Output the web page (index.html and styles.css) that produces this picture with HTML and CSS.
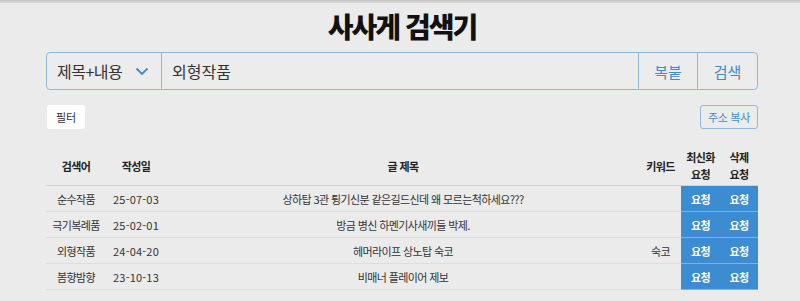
FILE: index.html
```html
<!DOCTYPE html>
<html lang="ko">
<head>
  <meta charset="UTF-8" />
  <meta name="viewport" content="width=device-width, initial-scale=1.0"/>
  <title>사사게 검색기</title>
  <link rel="stylesheet" href="styles.css">
</head>
<body>
  <div class="topbar"></div>
  <main class="wrap">
    <h1>사사게 검색기</h1>

    <div class="search">
      <div class="select">
        <span>제목+내용</span>
        <svg width="14" height="9" viewBox="0 0 14 9"><path d="M1.5 1.5 L7 7 L12.5 1.5" fill="none" stroke="#3d8bd0" stroke-width="1.8"/></svg>
      </div>
      <input type="text" value="외형작품">
      <button class="sbtn">복붙</button>
      <button class="sbtn">검색</button>
    </div>

    <div class="tools">
      <button class="filter">필터</button>
      <button class="copy">주소 복사</button>
    </div>

    <table>
      <colgroup>
        <col style="width:60px"><col style="width:60px"><col><col style="width:41px"><col style="width:39px"><col style="width:38px">
      </colgroup>
      <thead>
        <tr>
          <th>검색어</th>
          <th>작성일</th>
          <th>글 제목</th>
          <th>키워드</th>
          <th>최신화<br>요청</th>
          <th>삭제<br>요청</th>
        </tr>
      </thead>
      <tbody>
        <tr><td>순수작품</td><td class="date">25-07-03</td><td>상하탑 3관 튕기신분 같은길드신데 왜 모르는척하세요???</td><td></td><td class="req">요청</td><td class="req">요청</td></tr>
        <tr><td>극기복례품</td><td class="date">25-02-01</td><td>방금 병신 하멘기사새끼들 박제.</td><td></td><td class="req">요청</td><td class="req">요청</td></tr>
        <tr><td>외형작품</td><td class="date">24-04-20</td><td>헤머라이프 상노탑 숙코</td><td>숙코</td><td class="req">요청</td><td class="req">요청</td></tr>
        <tr><td>봄향밤향</td><td class="date">23-10-13</td><td>비매너 플레이어 제보</td><td></td><td class="req">요청</td><td class="req">요청</td></tr>
      </tbody>
    </table>
  </main>
</body>
</html>
```

FILE: styles.css
```css
body {
  margin: 0;
  background: #ebebeb;
  color: #222;
  font-family: 'Noto Sans CJK KR', 'Noto Sans', sans-serif;
}
.topbar {
  height: 3px;
  background: linear-gradient(#c4c4c4, #d8d8d8);
}
.wrap {
  width: 716px;
  padding-left: 4px;
  box-sizing: border-box;
  margin: 0 auto;
}
h1 {
  margin: 3px 0 0;
  text-align: center;
  font-size: 28px;
  font-weight: 800;
  letter-spacing: -2px;
  line-height: 40px;
  color: #111;
}
.search {
  display: flex;
  height: 38px;
  margin-top: 6px;
  border: 1px solid #8fb8df;
  border-radius: 4px;
  box-sizing: border-box;
  background: #ececec;
}
.select {
  width: 115px;
  display: flex;
  align-items: center;
  justify-content: space-between;
  padding: 0 12px 0 10px;
  box-sizing: border-box;
  border-right: 1px solid #8fb8df;
  font-size: 16px;
  letter-spacing: -0.5px;
  color: #333;
}
.search input {
  flex: 1;
  border: none;
  background: transparent;
  padding: 0 10px;
  font: inherit;
  font-size: 16px;
  color: #333;
  outline: none;
}
.sbtn {
  width: 59px;
  border: none;
  border-left: 1px solid #8fb8df;
  background: transparent;
  font: inherit;
  font-size: 15px;
  color: #3d8bd0;
}
.sbtn:last-child { width: 60px; }
.tools {
  display: flex;
  justify-content: space-between;
  margin-top: 15px;
}
.filter, .copy {
  font: inherit;
  font-size: 11px;
  height: 24px;
  border-radius: 3px;
  padding: 0 9px;
}
.filter {
  margin-left: 1px;
  background: #fff;
  border: none;
  color: #333;
}
.copy {
  background: transparent;
  border: 1px solid #8fb8df;
  color: #3d8bd0;
  padding: 0 7px;
  letter-spacing: -0.3px;
}
table {
  width: 100%;
  margin-top: 18px;
  border-collapse: collapse;
  table-layout: fixed;
  font-size: 11px;
  letter-spacing: -0.6px;
}
th {
  font-weight: 700;
  line-height: 17px;
  height: 38px;
  padding: 0;
  border-bottom: 1px solid #d2d2d2;
  color: #222;
}
td {
  height: 25px;
  padding: 0;
  text-align: center;
  color: #333;
  border-bottom: 1px solid #dedede;
  white-space: nowrap;
}
td.date {
  letter-spacing: 0.2px;
}
td.req {
  background: #3d8bd0;
  color: #fff;
  font-weight: 700;
  border-bottom: 1px solid #7fb1de;
}
```
